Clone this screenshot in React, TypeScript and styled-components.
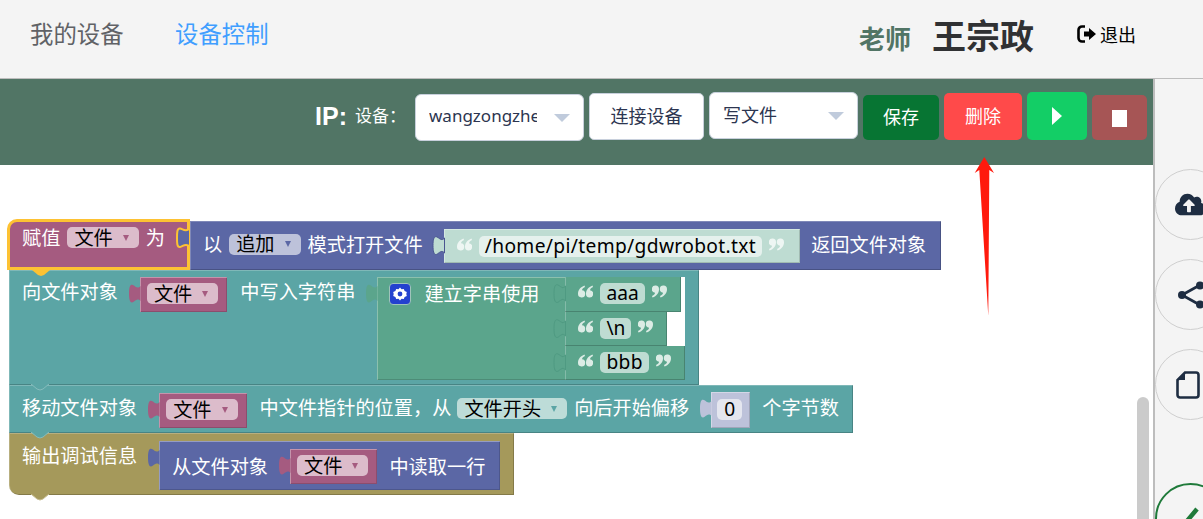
import React from 'react'
import styled, { createGlobalStyle } from 'styled-components'
import { FaCloudUploadAlt } from 'react-icons/fa'

const FONT = '"Noto Sans", "Noto Sans CJK SC", sans-serif'

const colors = {
  purple: '#5b67a5',
  teal: '#5ba5a5',
  green: '#5ba58c',
  olive: '#a5995b',
  rose: '#a55b80',
  lilac: '#bdc2da',
  mint: '#bedcd2',
}

type BlockColor = keyof typeof colors

const Global = createGlobalStyle`
  html, body {
    margin: 0;
    padding: 0;
    background: #fff;
    font-family: ${FONT};
  }
`

const Page = styled.div`
  width: 1203px;
  height: 519px;
  overflow: hidden;
  position: relative;
`

const Header = styled.header`
  height: 78px;
  background: #f4f4f4;
  border-bottom: 1px solid #bdbdbd;
  display: flex;
  align-items: flex-start;
  padding-left: 30px;
`

const NavItem = styled.a<{ $active?: boolean }>`
  font-size: 23.4px;
  line-height: 32px;
  margin-top: 18px;
  margin-right: 51.5px;
  color: ${(p) => (p.$active ? '#409eff' : '#606266')};
`

const UserBox = styled.div`
  margin-left: auto;
  display: flex;
  align-items: flex-start;
  padding-right: 67px;
`

const Role = styled.span`
  font-size: 26px;
  line-height: 36px;
  margin-top: 21px;
  font-weight: 700;
  color: #517565;
`

const UserName = styled.span`
  font-size: 34px;
  line-height: 44px;
  margin: 14px 0 0 21px;
  font-weight: 700;
  color: #303133;
`

const Logout = styled.a`
  display: flex;
  align-items: center;
  gap: 3px;
  margin: 22px 0 0 43px;
  height: 24px;
  font-size: 18px;
  color: #000;
`

const Body = styled.div`
  display: flex;
  height: 440px;
`

const Main = styled.main`
  width: 1153px;
  position: relative;
  overflow: hidden;
`

const Toolbar = styled.div`
  height: 86px;
  background: #517565;
  display: flex;
  justify-content: flex-end;
  align-items: flex-start;
  padding-right: 6px;
`

const IpLabel = styled.span`
  font-family: "Liberation Sans", sans-serif;
  font-size: 25px;
  line-height: 30px;
  font-weight: 700;
  color: #fff;
  margin-top: 22px;
`

const DeviceLabel = styled.span`
  font-size: 17px;
  line-height: 24px;
  color: #fff;
  margin: 25px 9px 0 8px;
`

const Select = styled.div<{ $w: number; $top: number }>`
  box-sizing: border-box;
  width: ${(p) => p.$w}px;
  height: 47px;
  margin: ${(p) => p.$top}px 5px 0 0;
  background: #fff;
  border: 1px solid #c8d0dc;
  border-radius: 6px;
  display: flex;
  align-items: center;
  padding: 0 13px;
  font-size: 17px;
  color: #2c3550;
`

const SelectText = styled.span<{ $w: number; $size?: number; $mb?: number }>`
  width: ${(p) => p.$w}px;
  font-size: ${(p) => p.$size || 17}px;
  line-height: 24px;
  margin-bottom: ${(p) => p.$mb ?? 3}px;
  overflow: hidden;
  white-space: nowrap;
`

const Caret = styled.i`
  margin-left: auto;
  width: 0;
  height: 0;
  border-left: 8px solid transparent;
  border-right: 8px solid transparent;
  border-top: 8px solid #c0cbdc;
`

const ToolButton = styled.button<{ $w: number; $h: number; $top: number; $bg: string; $color?: string; $pad?: string }>`
  box-sizing: border-box;
  width: ${(p) => p.$w}px;
  height: ${(p) => p.$h}px;
  margin: ${(p) => p.$top}px 5px 0 0;
  border: ${(p) => (p.$bg === '#fff' ? '1px solid #c8d0dc' : '0')};
  border-radius: 5px;
  background: ${(p) => p.$bg};
  color: ${(p) => p.$color || '#fff'};
  font: 18px ${FONT};
  padding: ${(p) => p.$pad || '0 0 3px'};
  display: flex;
  align-items: center;
  justify-content: center;
  &:last-child {
    margin-right: 0;
  }
`

const Canvas = styled.div`
  height: 354px;
  background: #fff;
  padding: 56px 0 0 9px;
  box-sizing: border-box;
`

const Stack = styled.div`
  display: flex;
  flex-direction: column;
  align-items: flex-start;
  font-size: 19.2px;
  color: #fff;
`

const Line = styled.div`
  display: flex;
  position: relative;
  z-index: 3;
`

const Statement = styled.div<{ $color: BlockColor; $z: number; $round?: boolean; $h: number; $pt?: number }>`
  position: relative;
  z-index: ${(p) => p.$z};
  box-sizing: border-box;
  height: ${(p) => p.$h}px;
  display: flex;
  align-items: flex-start;
  padding: ${(p) => p.$pt || 7}px 14px 0 13px;
  background: ${(p) => colors[p.$color]};
  border-bottom-left-radius: ${(p) => (p.$round ? '10px' : '0')};
  box-shadow: inset 1px 1px 0 rgba(255, 255, 255, 0.22), inset -1px -1px 0 rgba(0, 0, 0, 0.2);
`

const Hat = styled.div`
  position: relative;
  z-index: 4;
  box-sizing: border-box;
  width: 183px;
  height: 51px;
  margin: -2px 0 0 -2px;
  display: flex;
  align-items: flex-start;
  padding: 5px 0 0 12px;
  background: ${colors.rose};
  border: 3px solid #fdc233;
  border-top-left-radius: 10px;
`

const Reporter = styled.div`
  box-sizing: border-box;
  width: 751px;
  height: 49px;
  display: flex;
  align-items: center;
  padding: 0 0 3px 13px;
  background: ${colors.purple};
  box-shadow: inset 1px 1px 0 rgba(255, 255, 255, 0.22), inset -1px -1px 0 rgba(0, 0, 0, 0.2);
  position: relative;
`

const Label = styled.span<{ $ml?: number; $lh?: number }>`
  margin-left: ${(p) => p.$ml || 0}px;
  line-height: ${(p) => p.$lh || 21}px;
  white-space: nowrap;
  flex-shrink: 0;
`

const Pill = styled.span<{ $bg: string; $ml?: number; $mt?: number; $arrow: string }>`
  box-sizing: border-box;
  height: 21px;
  margin-left: ${(p) => p.$ml || 0}px;
  margin-top: ${(p) => p.$mt || 0}px;
  padding: 0 10px 2px 7px;
  display: flex;
  align-items: center;
  gap: 10px;
  border-radius: 5px;
  background: ${(p) => p.$bg};
  color: #000;
  white-space: nowrap;
  flex-shrink: 0;
  &::after {
    content: '';
    margin-top: 2px;
    border-left: 3.5px solid transparent;
    border-right: 3.5px solid transparent;
    border-top: 6px solid ${(p) => p.$arrow};
  }
`

const Socket = styled.div<{ $color: BlockColor; $ml?: number; $mt?: number; $h?: number; $pad?: string }>`
  position: relative;
  box-sizing: border-box;
  flex-shrink: 0;
  display: flex;
  align-items: flex-start;
  margin-left: ${(p) => p.$ml ?? 22}px;
  margin-top: ${(p) => p.$mt || 0}px;
  height: ${(p) => p.$h || 35}px;
  padding: ${(p) => p.$pad || '6px 9px 0 7px'};
  background: ${(p) => colors[p.$color]};
  box-shadow: inset 1px 1px 0 rgba(255, 255, 255, 0.35), inset -1px -1px 0 rgba(0, 0, 0, 0.15);
  color: #fff;
`

const Puzzle = styled.svg`
  position: absolute;
  left: -12px;
  top: 6px;
`

const BottomNotch = styled.svg<{ $b?: number }>`
  position: absolute;
  left: 21px;
  bottom: ${(p) => p.$b ?? -6}px;
  z-index: 5;
`

const Field = styled.span<{ $bg: string; $ml?: number; $pad?: number; $ls?: number }>`
  height: 21px;
  line-height: 19px;
  padding: 0 ${(p) => p.$pad ?? 6}px;
  margin-left: ${(p) => p.$ml ?? 7}px;
  letter-spacing: ${(p) => p.$ls || 0}px;
  background: ${(p) => p.$bg};
  color: #000;
  border-radius: 5px;
  white-space: nowrap;
`

const QuoteMark = styled.svg<{ $ml?: number }>`
  margin-left: ${(p) => p.$ml ?? 7}px;
  margin-top: 2px;
  flex-shrink: 0;
`

const Gear = styled.span`
  width: 22px;
  height: 22px;
  margin-right: 13px;
  flex-shrink: 0;
  border-radius: 4px;
  background: #2442cf;
  border: 1px solid #9fc4bb;
  box-sizing: border-box;
  display: flex;
  align-items: center;
  justify-content: center;
`

const JoinWrap = styled.div`
  position: relative;
  margin-left: 22px;
  display: flex;
  flex-shrink: 0;
`

const JoinBody = styled.div`
  box-sizing: border-box;
  width: 188px;
  height: 103px;
  padding: 6px 0 0 12px;
  display: flex;
  align-items: flex-start;
  background: ${colors.green};
  box-shadow: inset 1px 1px 0 rgba(255, 255, 255, 0.3), inset 0 -1px 0 rgba(0, 0, 0, 0.15);
`

const Slots = styled.div`
  width: 120px;
  height: 103px;
  background: #fff;
  display: flex;
  flex-direction: column;
  align-items: flex-start;
`

const TextPiece = styled.div<{ $h: number }>`
  position: relative;
  box-sizing: border-box;
  height: ${(p) => p.$h}px;
  padding: 6px 14px 0 13px;
  display: flex;
  align-items: flex-start;
  background: ${colors.green};
  box-shadow: inset -1px -1px 0 rgba(0, 0, 0, 0.2), inset 1px 0 0 rgba(255, 255, 255, 0.25);
`

const Sidebar = styled.aside`
  width: 50px;
  box-sizing: border-box;
  background: #f4f4f4;
  border-left: 2px solid #bdbdbd;
  overflow: hidden;
  display: flex;
  flex-direction: column;
  align-items: flex-start;
  padding-top: 90px;
  gap: 19px;
`

const Circle = styled.div<{ $green?: boolean; $mt?: number }>`
  width: 71px;
  height: 71px;
  flex-shrink: 0;
  box-sizing: border-box;
  border-radius: 50%;
  margin-top: ${(p) => p.$mt || 0}px;
  border: ${(p) => (p.$green ? '2px solid #1f7a3a' : '1px solid #cfcfcf')};
  display: flex;
  align-items: center;
  justify-content: center;
  color: #1e2d42;
`

const FileGlyph = styled.svg`
  margin-right: 5px;
`

const ScrollThumb = styled.div`
  position: absolute;
  right: 4px;
  top: 318px;
  width: 12px;
  height: 140px;
  border-radius: 6px;
  background: #cbcbcb;
`

const RedArrow = styled.svg`
  position: absolute;
  left: 970px;
  top: 150px;
  z-index: 10;
`

const Tab = ({ fill, stroke }: { fill: string; stroke?: string }) => (
  <Puzzle width="13" height="22" viewBox="0 0 13 22">
    <path
      d="M12.500 3C10 6 8 4 6 2.500C3 0.500 1 2 1 10.500C1 19 3 21 6 18.500C8 17 10 15 12.500 18Z"
      fill={fill}
      stroke={stroke || fill}
      strokeWidth={stroke ? 1 : 0}
    />
  </Puzzle>
)

const HatTab = styled(Puzzle)`
  left: -14px;
  top: 6px;
  z-index: 6;
`

const Notch = ({ fill, edge, bottom }: { fill: string; edge?: string; bottom?: number }) => (
  <BottomNotch $b={bottom} width="20" height="7" viewBox="0 0 20 7">
    <path d="M1 0L7 5L10 6L13 5L19 0Z" fill={fill} />
    {edge && <path d="M1 0L7 5L10 6L13 5L19 0" fill="none" stroke={edge} strokeWidth="1" />}
  </BottomNotch>
)

const Quote = ({ close, color, ml }: { close?: boolean; color: string; ml?: number }) => (
  <QuoteMark $ml={ml} width="15" height="13" viewBox="0 0 15 13">
    <g fill={color} transform={close ? 'rotate(180 7.5 6.5)' : undefined}>
      <path d="M6.500 0.500C2.500 2 0 5 0 8.800a3.600 3.600 0 1 0 4-3.500C4 4 5 3 7 2Z" />
      <path d="M14.500 0.500C10.500 2 8 5 8 8.800a3.600 3.600 0 1 0 4-3.500C12 4 13 3 15 2Z" />
    </g>
  </QuoteMark>
)

const FileVar = ({ ml }: { ml?: number }) => (
  <Socket $color="rose" $ml={ml}>
    <Tab fill={colors.rose} />
    <Pill $bg="#dcbccb" $arrow="#a55b80">
      文件
    </Pill>
  </Socket>
)

const App: React.FC = () => {
  return (
    <Page>
      <Global />
      <Header>
        <NavItem>我的设备</NavItem>
        <NavItem $active>设备控制</NavItem>
        <UserBox>
          <Role>老师</Role>
          <UserName>王宗政</UserName>
          <Logout>
            <svg width="20" height="18" viewBox="0 0 20 18">
              <path d="M8 1.500H5a3.500 3.500 0 0 0-3.500 3.500v8A3.500 3.500 0 0 0 5 16.500h3" fill="none" stroke="#000" strokeWidth="2.600" />
              <path d="M7 6.500h5V3l7 6-7 6v-3.500H7Z" fill="#000" />
            </svg>
            退出
          </Logout>
        </UserBox>
      </Header>
      <Body>
        <Main>
          <Toolbar>
            <IpLabel>IP:</IpLabel>
            <DeviceLabel>设备：</DeviceLabel>
            <Select $w={169} $top={15}>
              <SelectText $w={108}>wangzongzhe</SelectText>
              <Caret />
            </Select>
            <ToolButton $w={115} $h={47} $top={14} $bg="#fff" $color="#2c3550">
              连接设备
            </ToolButton>
            <Select $w={149} $top={13}>
              <SelectText $w={80} $size={18} $mb={1}>
                写文件
              </SelectText>
              <Caret />
            </Select>
            <ToolButton $w={76} $h={45} $top={16} $bg="#077533" $pad="0 0 4px">
              保存
            </ToolButton>
            <ToolButton $w={78} $h={47} $top={14} $bg="#ff4a4a">
              删除
            </ToolButton>
            <ToolButton $w={60} $h={48} $top={13} $bg="#13ce66" $pad="0">
              <svg width="10" height="18" viewBox="0 0 10 18">
                <path d="M0 0L10 9L0 18Z" fill="#fff" />
              </svg>
            </ToolButton>
            <ToolButton $w={55} $h={45} $top={16} $bg="#a65555" $pad="2px 0 0">
              <svg width="15" height="17" viewBox="0 0 15 17">
                <rect width="15" height="17" fill="#fff" />
              </svg>
            </ToolButton>
          </Toolbar>
          <Canvas>
            <Stack>
              <Line>
                <Hat>
                  <Label>赋值</Label>
                  <Pill $bg="#dcbccb" $arrow="#a55b80" $ml={7}>
                    文件
                  </Pill>
                  <Label $ml={7}>为</Label>
                  <Notch fill="#fdc233" bottom={-10} />
                </Hat>
                <Reporter>
                  <HatTab width="13" height="22" viewBox="0 0 13 22">
                    <path
                      d="M13 2C9 5 7 2 4 1.500C1 1 1 6 1 11C1 16 1 20.500 4 20C7 19.500 9 16 13 19"
                      fill={colors.purple}
                      stroke="#fdc233"
                      strokeWidth="2"
                    />
                  </HatTab>
                  <Label>以</Label>
                  <Pill $bg="#bdc2da" $arrow="#5b67a5" $ml={7}>
                    追加
                  </Pill>
                  <Label $ml={7}>模式打开文件</Label>
                  <Socket $color="mint" $h={34} $mt={4} $ml={21} $pad="7px 16px 0 13px">
                    <Tab fill={colors.mint} stroke="#4a5590" />
                    <Quote color="#eef6f3" ml={0} />
                    <Field $bg="#e5f1ed" $ls={0.35}>
                      /home/pi/temp/gdwrobot.txt
                    </Field>
                    <Quote close color="#eef6f3" />
                  </Socket>
                  <Label $ml={11}>返回文件对象</Label>
                </Reporter>
              </Line>
              <Statement $color="teal" $z={2} $h={115}>
                <Label $lh={30}>向文件对象</Label>
                <FileVar />
                <Label $ml={13} $lh={30}>
                  中写入字符串
                </Label>
                <JoinWrap>
                  <Tab fill={colors.green} />
                  <JoinBody>
                    <Gear>
                      <svg width="14" height="14" viewBox="0 0 14 14">
                        <path
                          d="M7 0.500l1.500 1.800 2.300-.4.800 2.200 2.200.9-.5 2 .5 2-2.200.9-.8 2.200-2.300-.4L7 13.500l-1.500-1.800-2.300.4-.8-2.200-2.200-.9.500-2-.5-2 2.200-.9.800-2.200 2.300.4Z"
                          fill="#fff"
                        />
                        <circle cx="7" cy="7" r="2.400" fill="#2442cf" />
                      </svg>
                    </Gear>
                    <Label>建立字串使用</Label>
                  </JoinBody>
                  <Slots>
                    <TextPiece $h={35}>
                      <Tab fill={colors.green} stroke="#4f9a82" />
                      <Quote color="#dcece5" ml={0} />
                      <Field $bg="#bedcd2">aaa</Field>
                      <Quote close color="#dcece5" />
                    </TextPiece>
                    <TextPiece $h={34}>
                      <Tab fill={colors.green} stroke="#4f9a82" />
                      <Quote color="#dcece5" ml={0} />
                      <Field $bg="#bedcd2">\n</Field>
                      <Quote close color="#dcece5" />
                    </TextPiece>
                    <TextPiece $h={34}>
                      <Tab fill={colors.green} stroke="#4f9a82" />
                      <Quote color="#dcece5" ml={0} />
                      <Field $bg="#bedcd2" $ls={0.35}>
                        bbb
                      </Field>
                      <Quote close color="#dcece5" />
                    </TextPiece>
                  </Slots>
                </JoinWrap>
                <Notch fill={colors.teal} edge="#86bcbc" />
              </Statement>
              <Statement $color="teal" $z={1} $h={48} $pt={8}>
                <Label $lh={30}>移动文件对象</Label>
                <FileVar />
                <Label $ml={13} $lh={30}>
                  中文件指针的位置，从
                </Label>
                <Pill $bg="#bddcd8" $arrow="#5ba5a5" $ml={6} $mt={5}>
                  文件开头
                </Pill>
                <Label $ml={7} $lh={30}>
                  向后开始偏移
                </Label>
                <Socket $color="lilac" $ml={22} $h={36} $mt={-1} $pad="7px 8px 0 6px">
                  <Tab fill={colors.lilac} />
                  <Field $bg="#e4e6ef" $ml={0} $pad={7}>
                    0
                  </Field>
                </Socket>
                <Label $ml={12} $lh={30}>
                  个字节数
                </Label>
                <Notch fill={colors.teal} edge="#86bcbc" />
              </Statement>
              <Statement $color="olive" $z={0} $h={62} $round>
                <Label $lh={32}>输出调试信息</Label>
                <Socket $color="purple" $h={49} $mt={1} $pad="8px 15px 0 13px">
                  <Tab fill={colors.purple} />
                  <Label $lh={35}>从文件对象</Label>
                  <FileVar />
                  <Label $ml={12} $lh={35}>
                    中读取一行
                  </Label>
                </Socket>
                <Notch fill={colors.olive} edge="#c6bd8f" />
              </Statement>
            </Stack>
          </Canvas>
          <ScrollThumb />
        </Main>
        <Sidebar>
          <Circle>
            <FaCloudUploadAlt size={31} />
          </Circle>
          <Circle>
            <svg width="28" height="28" viewBox="0 0 28 28">
              <path d="M5 14L23 4M5 14L23 24" stroke="currentColor" strokeWidth="2.600" fill="none" />
              <circle cx="5" cy="14" r="4" fill="currentColor" />
              <circle cx="23" cy="4.500" r="4" fill="currentColor" />
              <circle cx="23" cy="23.500" r="4" fill="currentColor" />
            </svg>
          </Circle>
          <Circle>
            <FileGlyph width="24" height="28" viewBox="0 0 24 28">
              <path d="M9 1.500H20a2.500 2.500 0 0 1 2.500 2.500V24a2.500 2.500 0 0 1-2.500 2.500H4A2.500 2.500 0 0 1 1.500 24V9Z" fill="none" stroke="currentColor" strokeWidth="2.600" />
              <path d="M9 2V9H2Z" fill="currentColor" />
            </FileGlyph>
          </Circle>
          <Circle $green $mt={44}>
            <svg width="36" height="36" viewBox="0 0 36 36">
              <path d="M4 20L9 26L24 8" fill="none" stroke="#1f7a3a" strokeWidth="4.500" />
            </svg>
          </Circle>
        </Sidebar>
      </Body>
      <RedArrow width="30" height="170" viewBox="0 0 30 170">
        <path d="M14.300 7L24 23L19.300 20L18.300 166L9.300 20L4.700 23Z" fill="#ff1a0d" />
      </RedArrow>
    </Page>
  )
}

export default App
